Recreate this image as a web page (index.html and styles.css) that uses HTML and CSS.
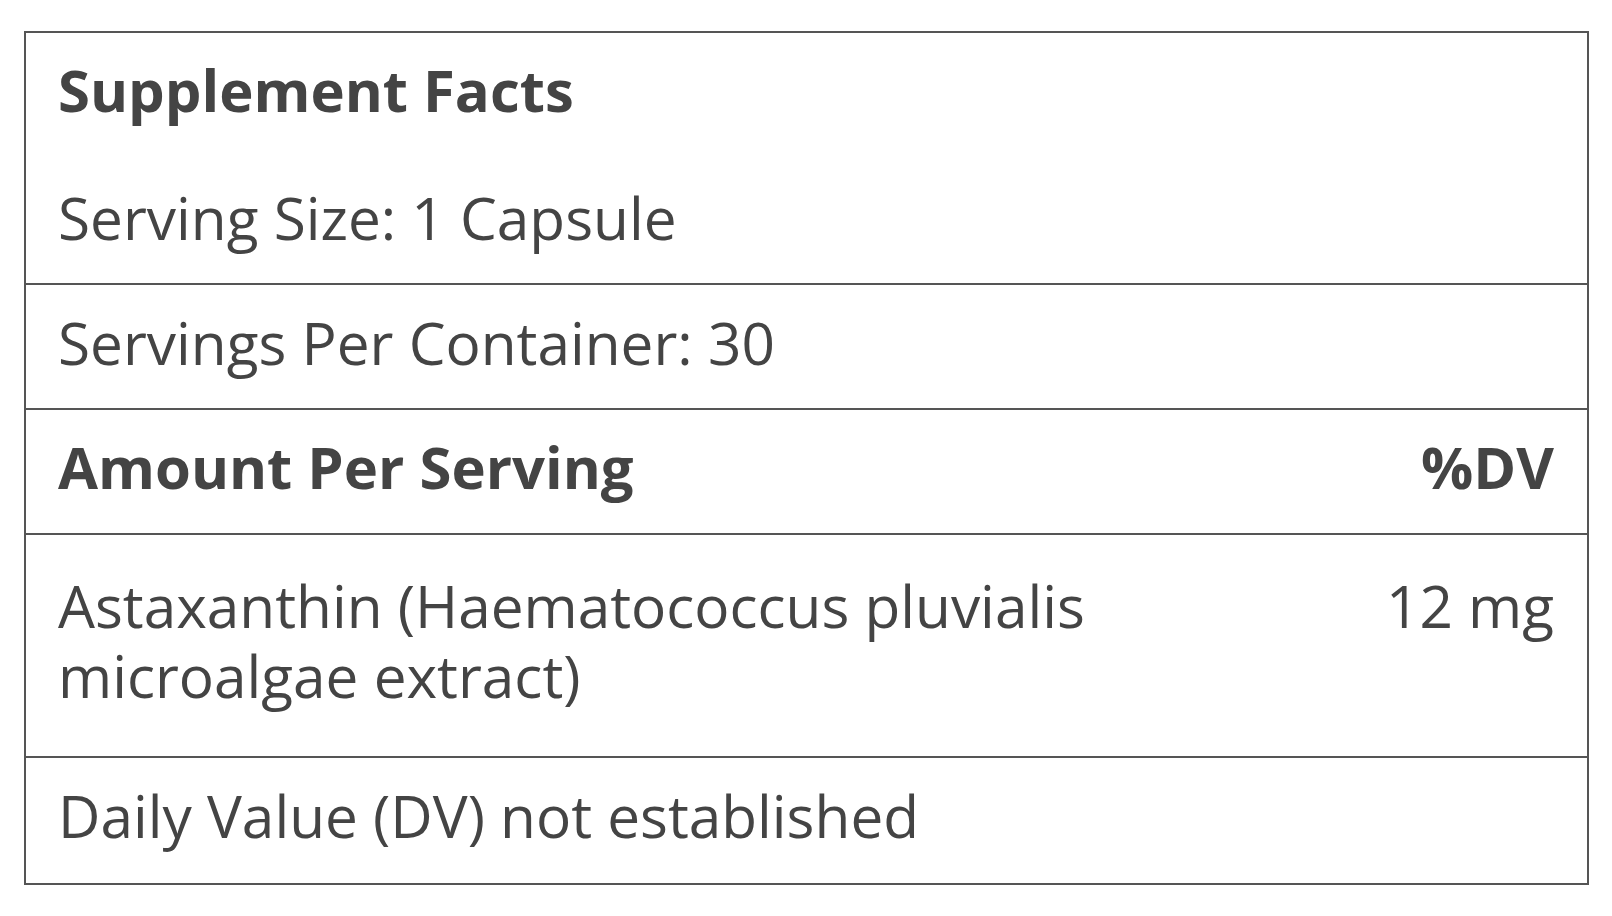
FILE: index.html
```html
<!DOCTYPE html>
<html lang="en">
<head>
<meta charset="utf-8">
<title>Supplement Facts</title>
<link rel="stylesheet" href="styles.css">
</head>
<body>
<section class="facts">
  <div class="row row-head">
    <h1 class="title">Supplement Facts</h1>
    <p class="text">Serving Size: 1 Capsule</p>
  </div>
  <div class="row">
    <p class="text">Servings Per Container: 30</p>
  </div>
  <div class="row row-split row-bold">
    <span class="name">Amount Per Serving</span>
    <span class="value">%DV</span>
  </div>
  <div class="row row-split row-tall">
    <span class="name">Astaxanthin (Haematococcus pluvialis microalgae extract)</span>
    <span class="value">12 mg</span>
  </div>
  <div class="row row-last">
    <p class="text">Daily Value (DV) not established</p>
  </div>
</section>
</body>
</html>
```
FILE: styles.css
```css
html, body {
  margin: 0;
  padding: 0;
  background: #ffffff;
}

body {
  font-family: "Open Sans", "Noto Sans", sans-serif;
  color: #444444;
  font-size: 58.5px;
  line-height: 70px;
}

.facts {
  box-sizing: border-box;
  width: 1565px;
  margin: 31px 0 0 24px;
  border: 2px solid #555555;
}

.row {
  padding: 22px 33px 31px 32px;
  border-bottom: 2px solid #555555;
}

.row-last {
  border-bottom: none;
  padding-bottom: 33px;
}

.title {
  margin: 0 0 57px 0;
  font-size: 58px;
  line-height: 70px;
  font-weight: 700;
}

.text {
  margin: 0;
}

.row-split {
  display: flex;
  justify-content: space-between;
  align-items: flex-start;
}

.row-bold {
  font-weight: 700;
  font-size: 58px;
}

.row-tall {
  padding-top: 35px;
  padding-bottom: 46px;
}

.name {
  flex: 0 1 75%;
}

.value {
  flex: 0 0 auto;
  text-align: right;
}
```
